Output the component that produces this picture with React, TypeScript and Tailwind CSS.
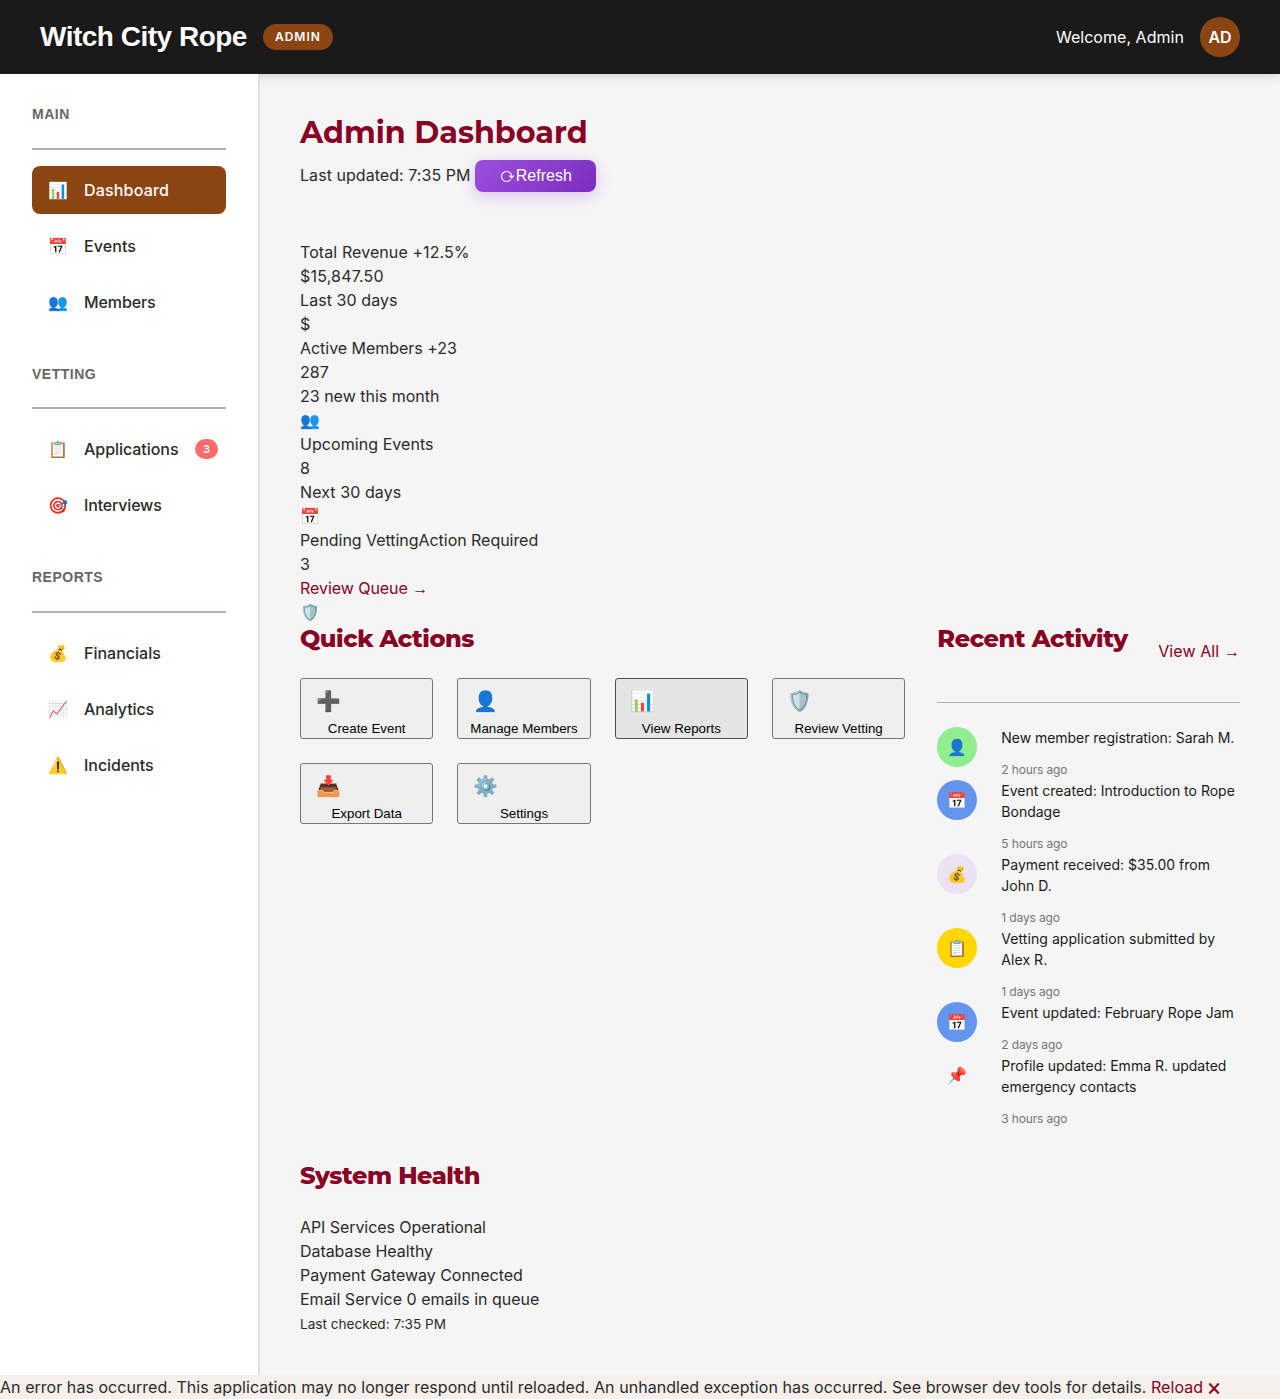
import React from "react";

type NavItem = { icon: string; label: string; active?: boolean; badge?: string; track?: string };

const sections: { title: string; items: NavItem[] }[] = [
  {
    title: "MAIN",
    items: [
      { icon: "📊", label: "Dashboard", active: true, track: "tracking-[0.18px]" },
      { icon: "📅", label: "Events", track: "tracking-[0.08px]" },
      { icon: "👥", label: "Members", track: "tracking-[-0.1px]" },
    ],
  },
  {
    title: "VETTING",
    items: [
      { icon: "📋", label: "Applications", badge: "3", track: "tracking-[-0.05px]" },
      { icon: "🎯", label: "Interviews", track: "tracking-[-0.17px]" },
    ],
  },
  {
    title: "REPORTS",
    items: [
      { icon: "💰", label: "Financials" },
      { icon: "📈", label: "Analytics", track: "tracking-[-0.1px]" },
      { icon: "⚠️", label: "Incidents", track: "tracking-[-0.05px]" },
    ],
  },
];

const actions = [
  { icon: "➕", label: "Create Event" },
  { icon: "👤", label: "Manage Members" },
  { icon: "📊", label: "View Reports", hot: true },
  { icon: "🛡️", label: "Review Vetting" },
  { icon: "📥", label: "Export Data" },
  { icon: "⚙️", label: "Settings" },
];

const activity = [
  { icon: "👤", bg: "bg-[#90ee90]", text: "New member registration: Sarah M.", time: "2 hours ago", track: "tracking-[-0.04px]" },
  { icon: "📅", bg: "bg-[#6495ed]", text: "Event created: Introduction to Rope Bondage", time: "5 hours ago" },
  { icon: "💰", bg: "bg-[#ebe3f3]", text: "Payment received: $35.00 from John D.", time: "1 days ago" },
  { icon: "📋", bg: "bg-[#ffd700]", text: "Vetting application submitted by Alex R.", time: "1 days ago", track: "tracking-[0.06px]" },
  { icon: "📅", bg: "bg-[#6495ed]", text: "Event updated: February Rope Jam", time: "2 days ago" },
  { icon: "📌", bg: "", text: "Profile updated: Emma R. updated emergency contacts", time: "3 hours ago" },
];

function Heading({ children }: { children: React.ReactNode }) {
  return (
    <h2 className="mb-[24px] pt-[1.2px] font-['Montserrat',sans-serif] text-[24px] leading-[28.8px] font-extrabold tracking-[-0.43px] text-[#880124]">
      {children}
    </h2>
  );
}

function Arrow() {
  return <span className="font-['Liberation_Sans',sans-serif] leading-4">→</span>;
}

function Sidebar() {
  return (
    <aside className="w-[260px] shrink-0 border-r-2 border-[#e0e0e0] bg-white p-8">
      {sections.map((s) => (
        <section key={s.title} className="mb-10">
          <h3 className="mb-4 h-[43.6px] border-b-2 border-[#b8b0a8] font-['Liberation_Sans',sans-serif] text-[14px] leading-[16.8px] font-bold tracking-[0.5px] text-[#666]">
            {s.title}
          </h3>
          <div className="flex flex-col gap-2">
            {s.items.map((i) => (
              <a
                key={i.label}
                className={
                  i.active
                    ? "flex h-12 items-center gap-4 rounded-lg bg-[#8b4513] px-4 font-medium text-white"
                    : "relative flex h-12 items-center gap-4 rounded-lg px-4 font-medium text-[#2b2b2b]"
                }
              >
                <span className="w-5 text-center">{i.icon}</span>
                <span className={i.track}>{i.label}</span>
                {i.badge && (
                  <span className="absolute top-1/2 right-2 -translate-y-1/2 rounded-[10px] bg-[#ff6b6b] px-2 py-0.5 text-[11px] leading-4 font-semibold text-white">
                    {i.badge}
                  </span>
                )}
              </a>
            ))}
          </div>
        </section>
      ))}
    </aside>
  );
}

export default function App() {
  return (
    <div className="flex h-[1399px] flex-col bg-[#f5f5f5] font-['Inter',sans-serif] text-[16px] leading-6 text-[#2b2b2b]">
      <header className="flex h-[74px] shrink-0 items-center justify-between bg-[#1a1a1a] px-10 text-white shadow-[0_2px_10px_rgba(0,0,0,0.15)]">
        <div className="flex items-center gap-4">
          <span className="font-['Liberation_Sans',sans-serif] text-[28px] leading-[42px] font-bold tracking-[-0.5px] [text-shadow:1px_1px_2px_rgba(0,0,0,0.3)]">
            Witch City Rope
          </span>
          <span className="rounded-[20px] bg-[#8b4513] px-3 py-1 text-[12px] leading-[18px] font-semibold tracking-[1px]">
            ADMIN
          </span>
        </div>
        <div className="flex items-center gap-4">
          <span className="tracking-[0.04px]">Welcome, Admin</span>
          <span className="flex size-10 items-center justify-center rounded-full bg-[#8b4513] font-semibold">AD</span>
        </div>
      </header>

      <div className="flex h-[1301px] shrink-0">
        <Sidebar />
        <main className="min-w-0 flex-1 p-10">
          <h1 className="mb-2 font-['Montserrat',sans-serif] text-[30.25px] leading-[38px] font-bold text-[#880124]">
            Admin Dashboard
          </h1>
          <div className="mb-12 flex h-8 items-center gap-1">
            <span className="-mt-0.5 tracking-[0.05px]">Last updated: 7:35 PM</span>
            <button className="flex h-8 w-[121px] items-center justify-center rounded-lg bg-linear-135 from-[#9d4edd] to-[#7b2cbf] pl-px font-['Liberation_Sans',sans-serif] text-[16px] text-white shadow-[0_4px_15px_rgba(157,78,221,0.3)]">
              <span className="font-['Noto_Sans_Math',sans-serif] text-[12.8px] leading-4">⟳</span>Refresh
            </button>
          </div>

          <div>
            <div className="tracking-[0.09px]">Total Revenue +12.5%</div>
            <div className="tracking-[0.2px]">$15,847.50</div>
            <div className="tracking-[0.08px]">Last 30 days</div>
            <div>$</div>
            <div className="tracking-[-0.03px]">Active Members +23</div>
            <div>287</div>
            <div>23 new this month</div>
            <div className="h-6">👥</div>
            <div className="tracking-[0.06px]">Upcoming Events</div>
            <div>8</div>
            <div className="tracking-[0.08px]">Next 30 days</div>
            <div className="h-6">📅</div>
            <div className="tracking-[-0.04px]">Pending VettingAction Required</div>
            <div>3</div>
            <div className="h-6 text-[#880124]">
              <span className="tracking-[-0.05px]">Review Queue </span>
              <Arrow />
            </div>
            <div className="h-6">🛡️</div>
          </div>

          <div className="mb-8 grid grid-cols-[2fr_1fr] gap-8">
            <section>
              <Heading>Quick Actions</Heading>
              <div className="grid grid-cols-4 gap-6">
                {actions.map((a) => (
                  <button
                    key={a.label}
                    className={
                      a.hot
                        ? "h-[61px] rounded-[3px] border border-[#4f4f4f] bg-[#e5e5e5] px-[6px] pb-0.5 font-['Liberation_Sans',sans-serif] text-[13.333px] leading-[15px] text-black"
                        : "h-[61px] rounded-[3px] border border-[#767676] bg-[#efefef] px-[6px] pb-0.5 font-['Liberation_Sans',sans-serif] text-[13.333px] leading-[15px] text-black"
                    }
                  >
                    <span className="mt-[3px] -mb-px ml-px flex h-10 w-10 items-center justify-center text-[20px]">{a.icon}</span>
                    <span className="block pb-px">{a.label}</span>
                  </button>
                ))}
              </div>
            </section>

            <section>
              <div className="mb-6 flex items-center justify-between border-b border-[#b8b0a8] pb-6">
                <Heading>Recent Activity</Heading>
                <a className="tracking-[0.1px] text-[#880124]">
                  View All <Arrow />
                </a>
              </div>
              {activity.map((a) => (
                <div key={a.text} className="flex gap-6">
                  <span className={`flex size-10 shrink-0 items-center justify-center rounded-full ${a.bg}`}>
                    {a.icon}
                  </span>
                  <div className="min-w-0 flex-1">
                    <p className={`mb-[13px] text-[14px] leading-[21px] text-[#1a1a1a] ${a.track ?? ""}`}>{a.text}</p>
                    <p className="mb-px text-[12px] leading-[18px] tracking-[-0.15px] text-[#757575]">{a.time}</p>
                  </div>
                </div>
              ))}
            </section>
          </div>

          <Heading>System Health</Heading>
          <div className="tracking-[-0.07px]">API Services Operational</div>
          <div className="tracking-[-0.06px]">Database Healthy</div>
          <div className="tracking-[-0.04px]">Payment Gateway Connected</div>
          <div>Email Service 0 emails in queue</div>
          <div className="pt-px text-[13.6px]">Last checked: 7:35 PM</div>
        </main>
      </div>

      <footer className="h-6 shrink-0 bg-[#f5f0eb] tracking-[0.045px] whitespace-nowrap">
        An error has occurred. This application may no longer respond until reloaded. An unhandled exception has
        occurred. See browser dev tools for details. <a className="text-[#880124]">Reload</a>{" "}
        <span className="text-[#880124]">🗙</span>
      </footer>
    </div>
  );
}
